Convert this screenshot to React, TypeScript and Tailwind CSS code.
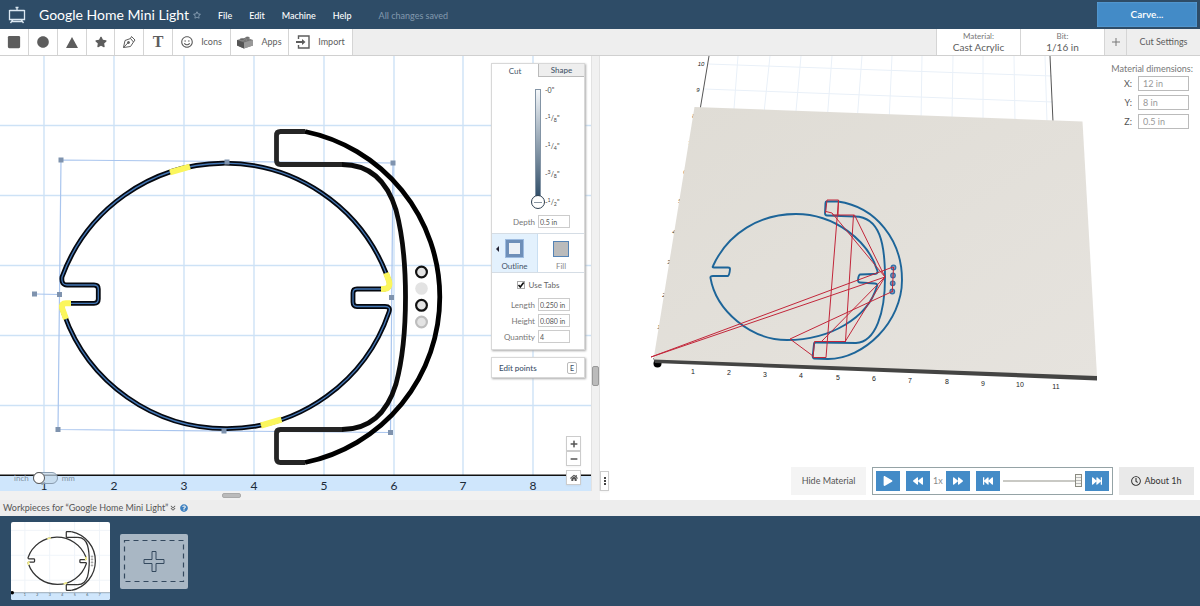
import type { ReactNode } from "react";
import clsx from "clsx";
import {
  FaBackward,
  FaCircle,
  FaFastBackward,
  FaFastForward,
  FaForward,
  FaHome,
  FaMinus,
  FaPlay,
  FaPlus,
  FaQuestionCircle,
  FaRegClock,
  FaRegSmile,
  FaRegStar,
  FaSquare,
  FaStar,
} from "react-icons/fa";
import { FaAnglesDown } from "react-icons/fa6";

const TOP_ARC = "M62 277A173.3 173.3 0 0 1 386 273";
const RING =
  TOP_ARC +
  "L389 281Q391 289 383 289H357Q353 289 353 293V302Q353 306.5 357 306.5H385Q391 306.5 389 312A172 172 0 0 1 64 314L62 308Q61 303.3 66 303.3H94Q98.3 303.3 98.3 299V289Q98.3 285 94 285H67Q61 285 62 277Z";
const BRACKET_OUTER = "M305 131.5A169 169 0 0 1 305 462.5";
const BRACKET_INNER =
  "M342 429.5C372 429.5 388 410 396 384C403 358 405.5 329 405.5 297C405.5 265 403 236 396 210C388 184 372 164.5 342 164.5";
const BRACKET_ENDS = [
  "M342 164.5H280.5Q276.5 164.5 276.5 160.5V135.5Q276.5 131.5 280.5 131.5H305",
  "M305 462.5H280.5Q276.5 462.5 276.5 458.5V433.5Q276.5 429.5 280.5 429.5H342",
];
const TABS = [
  "M170 172.3L190 166.7",
  "M386 273L389 281Q391 289 383 289H381",
  "M71 303.3H66Q61 303.3 62 308L66 319",
  "M261 425.5L281.5 419.5",
];
const HANDLES = [
  [61, 160],
  [227, 162],
  [393, 163],
  [391.5, 297.5],
  [390.5, 432.5],
  [224, 431],
  [58, 429.5],
  [59.5, 294.5],
  [34.5, 294],
];
const GRID_X = [44, 114, 184, 254, 324, 394, 463, 533];
const GRID_Y = [125, 195, 265, 335, 405];

function CanvasDrawing() {
  return (
    <svg
      viewBox="0 56 591 435"
      preserveAspectRatio="xMinYMax slice"
      className="absolute inset-0 size-full"
      fill="none"
      aria-hidden="true"
    >
      <rect y="475" width="591" height="16" fill="#cfe6fc" />
      <g stroke="#cde2f6" strokeWidth="1.4">
        {GRID_X.map((x) => (
          <path key={x} d={`M${x} 56V475`} />
        ))}
        {GRID_Y.map((y) => (
          <path key={y} d={`M0 ${y}.5H591`} />
        ))}
      </g>
      <path d="M0 475.3H591" stroke="#111" strokeWidth="1.4" />
      <g
        fill="#1b2a38"
        fontFamily="Lato, sans-serif"
        fontSize="12"
        textAnchor="middle"
      >
        {GRID_X.map((x, i) => (
          <text key={x} x={x} y="490">
            {i + 1}
          </text>
        ))}
      </g>
      <path
        d="M61 160L393 163L390.500 432.500L58 429.500ZM34.500 294L59.500 294.500"
        stroke="#a9c5ee"
        strokeWidth="1.2"
      />
      <path d={RING} stroke="#05080f" strokeWidth="4.8" />
      <path d={RING} stroke="#4477b5" strokeWidth="1.3" />
      {TABS.map((d) => (
        <path key={d} d={d} stroke="#fbf65c" strokeWidth="6" />
      ))}
      <path d={BRACKET_OUTER} stroke="#000" strokeWidth="4.800" />
      <path d={BRACKET_INNER} stroke="#0b0b0b" strokeWidth="4.800" />
      {BRACKET_ENDS.map((d) => (
        <path key={d} d={d} stroke="#252525" strokeWidth="4.800" />
      ))}
      <g fill="#e3e3e3" strokeWidth="2.200">
        <circle cx="421.500" cy="272" r="5.400" stroke="#111" />
        <circle cx="421.500" cy="288.500" r="6.300" />
        <circle cx="421.500" cy="305.300" r="5.400" stroke="#111" />
        <circle cx="421.500" cy="322" r="5.400" stroke="#bdbdbd" />
      </g>
      {HANDLES.map(([x, y]) => (
        <rect
          key={`${x}-${y}`}
          x={x - 2.5}
          y={y - 2.5}
          width="5"
          height="5"
          fill="#7f93ae"
        />
      ))}
    </svg>
  );
}

function WorkpieceThumb() {
  return (
    <svg viewBox="-34 78 556 438" className="h-[78px] w-full" fill="none" aria-hidden="true">
      <path
        d="M44 78V475M183 78V475M323 78V475M463 78V475M-34 125H522M-34 265H522M-34 405H522"
        stroke="#eef3f8"
        strokeWidth="5"
      />
      <rect x="-34" y="475" width="556" height="41" fill="#cfe6fc" />
      <path d="M-34 475H522" stroke="#7b8d9c" strokeWidth="4" />
      <circle cx="-27" cy="475" r="10" fill="#000" />
      <g fill="#456" fontFamily="Lato, sans-serif" fontSize="20" textAnchor="middle">
        {GRID_X.slice(0, 7).map((x, i) => (
          <text key={x} x={x} y="494">
            {i + 1}
          </text>
        ))}
      </g>
      <g stroke="#333" strokeWidth="7">
        <path d={RING} />
        <path d={BRACKET_OUTER} />
        <path d={BRACKET_INNER} />
        {BRACKET_ENDS.map((d) => (
          <path key={d} d={d} />
        ))}
      </g>
      {TABS.map((d) => (
        <path key={d} d={d} stroke="#f6f08a" strokeWidth="9" />
      ))}
      <g stroke="#777" strokeWidth="4">
        <circle cx="421" cy="272" r="4" />
        <circle cx="421" cy="288" r="4" />
        <circle cx="421" cy="305" r="4" />
        <circle cx="421" cy="322" r="4" />
      </g>
    </svg>
  );
}

const BED_VERTICALS = [
  [738, 733],
  [770, 763],
  [801, 795],
  [832, 827],
  [862, 857],
  [892, 889],
  [922, 921],
  [953, 952],
  [983, 983],
  [1014, 1015],
  [1045, 1047],
];
const X_LABELS = [
  [693, 374],
  [729, 375],
  [765, 377],
  [801, 378],
  [838, 380],
  [874, 381],
  [910, 383],
  [947, 384],
  [983, 386],
  [1020, 387],
  [1056, 389],
];
const Y_LABELS = [
  [659, 329],
  [664, 297],
  [669, 264],
  [674, 234],
  [680, 203],
  [685, 174],
  [690, 145],
  [694, 118],
  [698, 92],
  [701, 66],
];

function PreviewDrawing() {
  return (
    <svg
      viewBox="600 56 600 444"
      preserveAspectRatio="xMinYMin slice"
      className="absolute inset-0 size-full"
      fill="none"
      aria-hidden="true"
    >
      <defs>
        <linearGradient id="board" x1="0" y1="0" x2="1" y2="1">
          <stop offset="0" stopColor="#dfdcd5" />
          <stop offset="1" stopColor="#e6e3de" />
        </linearGradient>
      </defs>
      <g stroke="#e9f0f8">
        {BED_VERTICALS.map(([top, bottom]) => (
          <path key={top} d={`M${top} 56L${bottom} 122`} />
        ))}
        <path d="M708 64L1052 76M704 89L1053 102" />
      </g>
      <path d="M709 56L700 110M1050 56L1053 122" stroke="#555" />
      <g
        fill="#222"
        fontFamily="'Liberation Sans', sans-serif"
        fontSize="7"
        textAnchor="middle"
      >
        {X_LABELS.map(([x, y], i) => (
          <text key={x} x={x} y={y}>
            {i + 1}
          </text>
        ))}
        {Y_LABELS.map(([x, y], i) => (
          <text key={x} x={x} y={y} fontSize="6" fontStyle="italic">
            {i + 1}
          </text>
        ))}
      </g>
      <circle cx="657.500" cy="363.500" r="4" fill="#000" />
      <path d="M653 358L1097 375V380.500L655 363Z" fill="#444443" />
      <path d="M694.500 107L1082.500 121.500L1097 376L653.500 359.500Z" fill="url(#board)" />
      <g stroke="#1d6599" strokeWidth="1.900" strokeLinejoin="round">
        <path d="M713 266C728 233 760 214 796 214C834 214 868 240 877.500 271Q878 274 874 274L860 274.500Q858.500 275 858 280Q858 282.500 860 282.500L875 283.500Q878 284 877 286C868 318 830 340 787 340C750 340 716 310 710.500 278Q710 276 713 276H728Q729.500 275 730 269Q730 267.500 728 267.500H714Q712 267.500 713 266Z" />
        <path d="M827 201.500H838C876 207 902 240 902 280C902 322 864 359 828 359L814 358.500Q812.500 358 812.700 356L814 344Q814 342.500 816 342.500L856 343C876 342 885 312 885 278C885 244 880 217 855 216.500L827 215.500Q825 215.500 825 213L825.500 203Q825.500 201.500 827 201.500Z" />
      </g>
      <g stroke="#2f70a8" strokeWidth="1.200" fill="#7f93b5">
        <circle cx="893.500" cy="267.500" r="2.300" />
        <circle cx="893" cy="275.500" r="2.300" />
        <circle cx="892.700" cy="283.300" r="2.300" />
        <circle cx="892.300" cy="291.500" r="2.300" />
      </g>
      <g stroke="#c2263a" strokeWidth="1" strokeLinejoin="round">
        <path d="M893 267L651 357L885 277L854.500 215H832M853.500 215L845.500 341L885 277L832 213L826 211.500" />
        <path d="M838.500 200L826 357.500H813L814.500 341.500H846" />
        <path d="M825.500 213L827 200H838.500L838 215" />
        <path d="M885 277L821.500 341.500" />
        <path d="M892.300 291.500L790 339L813 356M893.500 267L892.300 292" />
      </g>
    </svg>
  );
}

function ToolButton({
  label,
  className = "w-[29px]",
  showLabel,
  children,
}: {
  label: string;
  className?: string;
  showLabel?: boolean;
  children: ReactNode;
}) {
  return (
    <button
      type="button"
      aria-label={label}
      className={clsx(
        "flex items-center justify-center gap-2 border-r border-[#d5d5d5] bg-white text-[#5d5d5d]",
        className
      )}
    >
      {children}
      {showLabel ? <span>{label}</span> : null}
    </button>
  );
}

function Header() {
  return (
    <header className="flex h-[29px] items-center bg-[#2e4c67] pr-[3px] text-white">
      <svg viewBox="0 0 18 18" className="ml-2 size-[18px]" fill="none" stroke="#dce8f2" aria-hidden="true">
        <path d="M1.500 4.500H16.500M1.500 4V13.500H16.500V4M9 1V4.500M5 13.500L2.500 17M13 13.500L15.500 17M4 15.500H14" strokeWidth="1.300" />
        <path d="M7.500 1.500H10.500" strokeWidth="1.500" />
      </svg>
      <h1 className="ml-[13px] text-[14px] leading-5">Google Home Mini Light</h1>
      <FaRegStar className="ml-1 size-2 text-[#93a9bd]" />
      <nav className="ml-[17px] flex items-center gap-[17px] pt-[2px] text-[9px] font-medium">
        <a href="#file">File</a>
        <a href="#edit">Edit</a>
        <a href="#machine">Machine</a>
        <a href="#help">Help</a>
      </nav>
      <span className="ml-[27px] pt-[3px] text-[9px] text-[#8299ae]">All changes saved</span>
      <button
        type="button"
        className="ml-auto h-[25px] w-[100px] bg-[#438bc7] text-[10px] font-semibold shadow-[inset_0_0_2px_#77b1df]"
      >
        Carve...
      </button>
    </header>
  );
}

function Toolbar() {
  return (
    <div className="flex h-[27px] items-stretch border-b border-[#d0d0d0] bg-[#eee] text-[9px] text-[#5d5d5d]">
      <ToolButton label="Square">
        <FaSquare className="size-[14px]" />
      </ToolButton>
      <ToolButton label="Circle">
        <FaCircle className="size-3" />
      </ToolButton>
      <ToolButton label="Triangle">
        <svg viewBox="0 0 12 11" className="h-[11px] w-3" fill="currentColor">
          <path d="M6 0L12 11H0Z" />
        </svg>
      </ToolButton>
      <ToolButton label="Star" className="w-7">
        <FaStar className="size-3" />
      </ToolButton>
      <ToolButton label="Pen">
        <svg viewBox="0 0 14 14" className="size-[14px]" fill="none" stroke="currentColor">
          <path d="M1.500 12.500L3 5.500L8.500 3.500L11.500 7L8.500 11.500L1.500 12.500ZM8.500 3.500L9.500 1.500L13 5L11.500 7M1.500 12.500L6 7.800" />
          <circle cx="6.500" cy="7.500" r="1" fill="currentColor" />
        </svg>
      </ToolButton>
      <ToolButton label="Text">
        <span className="font-['Liberation_Serif',serif] text-[16px] leading-4 font-bold">T</span>
      </ToolButton>
      <ToolButton label="Icons" className="w-[58px]" showLabel>
        <FaRegSmile className="size-3" />
      </ToolButton>
      <ToolButton label="Apps" className="w-[58px]" showLabel>
        <svg viewBox="0 0 16 13" className="h-[13px] w-4" aria-hidden="true">
          <path d="M0 4L9 1.500L16 4V9.500L7 12.500L0 9.500Z" fill="#777" />
          <path d="M0 4L7 6.500V12.500L0 9.500Z" fill="#555" />
          <path d="M7 6.500L16 4V9.500L7 12.500Z" fill="#999" />
          <g fill="#666" stroke="#aaa" strokeWidth="0.400">
            <ellipse cx="5" cy="3.500" rx="2.200" ry="1.200" />
            <ellipse cx="10.500" cy="2" rx="2.200" ry="1.200" />
            <ellipse cx="11" cy="4" rx="2" ry="1" />
          </g>
        </svg>
      </ToolButton>
      <ToolButton label="Import" className="w-16" showLabel>
        <svg viewBox="0 0 14 14" className="size-[14px]" fill="none" stroke="currentColor" strokeWidth="1.400" aria-hidden="true">
          <path d="M2.500 4V1H13V13H2.500V10" />
          <path d="M0 7H7" strokeWidth="2" />
          <path d="M6 4L9.500 7L6 10Z" fill="currentColor" stroke="none" />
        </svg>
      </ToolButton>

      <button
        type="button"
        className="ml-auto flex w-[85px] flex-col items-center justify-center border-x border-[#d5d5d5] bg-white text-[10px]"
      >
        <span className="text-[8px] leading-[10px] text-[#777]">Material:</span>
        <span className="leading-3">Cast Acrylic</span>
      </button>
      <button
        type="button"
        className="flex w-[84px] flex-col items-center justify-center border-r border-[#d5d5d5] bg-white text-[10px]"
      >
        <span className="text-[8px] leading-[10px] text-[#777]">Bit:</span>
        <span className="leading-3">1/16 in</span>
      </button>
      <button
        type="button"
        aria-label="Add bit"
        className="flex w-[22px] items-center justify-center border-r border-[#d5d5d5] text-[#777]"
      >
        <svg viewBox="0 0 8 8" className="size-2" stroke="currentColor">
          <path d="M4 0V8M0 4H8" />
        </svg>
      </button>
      <button type="button" className="w-[73px]">
        Cut Settings
      </button>
    </div>
  );
}

const DEPTH_MARKS = [
  ["", "0"],
  ["1", "8"],
  ["1", "4"],
  ["3", "8"],
  ["1", "2"],
];

function Field({ id, label, value }: { id: string; label: string; value: string }) {
  return (
    <div className="flex items-center justify-end gap-[3px]">
      <label htmlFor={id} className="text-[#777]">
        {label}
      </label>
      <input
        id={id}
        defaultValue={value}
        className="h-[13px] w-8 border border-[#ccc] bg-white px-[1px] text-[7px] text-[#555]"
      />
    </div>
  );
}

function CutPanel() {
  return (
    <div className="border border-[#d8d8d8] bg-white text-[8px] leading-[10px] text-[#45566a] shadow-[1px_1px_2px_#aaa]">
      <div role="tablist" className="flex h-[13px] text-center">
        <button type="button" role="tab" aria-selected="true" className="w-1/2">
          Cut
        </button>
        <button
          type="button"
          role="tab"
          aria-selected="false"
          className="w-1/2 border-b border-l border-[#bbb] bg-[#eee] font-medium"
        >
          Shape
        </button>
      </div>

      <div className="flex justify-center pt-2 pl-5">
        <input
          type="range"
          aria-label="Cut depth"
          defaultValue="100"
          className="mt-1 h-[120px] w-[14px] appearance-none bg-transparent [writing-mode:vertical-lr] [&::-webkit-slider-runnable-track]:h-full [&::-webkit-slider-runnable-track]:w-[6px] [&::-webkit-slider-runnable-track]:bg-[linear-gradient(#f4f7fa,#2e4c67),linear-gradient(#8394a5,#8394a5)] [&::-webkit-slider-runnable-track]:bg-[length:4px_108px,6px_110px] [&::-webkit-slider-runnable-track]:bg-[position:1px_1px,0_0] [&::-webkit-slider-runnable-track]:bg-no-repeat [&::-webkit-slider-thumb]:-ml-1 [&::-webkit-slider-thumb]:size-[14px] [&::-webkit-slider-thumb]:appearance-none [&::-webkit-slider-thumb]:rounded-full [&::-webkit-slider-thumb]:border [&::-webkit-slider-thumb]:border-[#2c3e50] [&::-webkit-slider-thumb]:bg-white [&::-webkit-slider-thumb]:bg-[linear-gradient(#8a97a3,#8a97a3)] [&::-webkit-slider-thumb]:bg-[length:8px_1px] [&::-webkit-slider-thumb]:bg-center [&::-webkit-slider-thumb]:bg-no-repeat"
        />
        <div className="flex h-[122px] w-5 flex-col justify-between text-[7px] text-[#444]">
          {DEPTH_MARKS.map(([top, bottom]) => (
            <span key={top + bottom} className="whitespace-nowrap">
              {top ? (
                <>
                  -<sup>{top}</sup>/<sub>{bottom}</sub>"
                </>
              ) : (
                `-${bottom}"`
              )}
            </span>
          ))}
        </div>
      </div>

      <div className="pt-[6px] pr-[14px] pb-[5px]">
        <Field id="depth" label="Depth" value="0.5 in" />
      </div>

      <div className="flex h-10 border-y border-[#d5dde5]">
        <button
          type="button"
          aria-pressed="true"
          className="relative flex w-1/2 flex-col items-center justify-end gap-1 border-r border-[#c9dff2] bg-[#e3f1fd] pb-[1px]"
        >
          <span className="absolute top-3 left-1 border-y-[3px] border-r-[3px] border-y-transparent border-r-[#223]" />
          <span className="size-[17px] border-[3px] border-[#6f8fb8] bg-[#edf1f6] outline outline-[#9dbbe0]" />
          Outline
        </button>
        <button
          type="button"
          aria-pressed="false"
          className="flex w-1/2 flex-col items-center justify-end gap-1 pb-[1px] text-[#888]"
        >
          <span className="size-4 border border-[#5583b5] bg-[#bbb]" />
          Fill
        </button>
      </div>

      <label className="flex items-center justify-center gap-1 pt-[7px] text-[#666]">
        <span className="grid size-2 place-items-center">
          <input
            type="checkbox"
            defaultChecked
            className="peer col-start-1 row-start-1 size-2 appearance-none border border-[#aaa] bg-white"
          />
          <svg
            viewBox="0 0 8 8"
            className="pointer-events-none invisible col-start-1 row-start-1 size-2 peer-checked:visible"
            fill="none"
            stroke="#111"
            strokeWidth="1.600"
          >
            <path d="M1.500 4L3.300 6L6.700 1.500" />
          </svg>
        </span>
        Use Tabs
      </label>
      <div className="flex flex-col gap-[3px] pt-2 pr-[14px] pb-[6px]">
        <Field id="length" label="Length" value="0.250 in" />
        <Field id="height" label="Height" value="0.080 in" />
        <Field id="quantity" label="Quantity" value="4" />
      </div>
    </div>
  );
}

function ZoomButton({ label, children }: { label: string; children: ReactNode }) {
  return (
    <button
      type="button"
      aria-label={label}
      className="flex size-[15px] items-center justify-center border border-[#ccc] bg-white text-[#555] shadow-xs"
    >
      {children}
    </button>
  );
}

function DesignPane() {
  return (
    <section className="grid w-1/2 grid-cols-[1fr_9px] grid-rows-[1fr_9px]">
      <div className="relative overflow-hidden bg-white">
        <CanvasDrawing />
        <div className="absolute top-[7px] right-[6px] flex w-[94px] flex-col gap-[7px]">
          <CutPanel />
          <button
            type="button"
            className="flex h-[21px] items-center justify-between border border-[#d8d8d8] bg-white px-[7px] text-[8px] font-medium text-[#3b4f68] shadow-[1px_1px_2px_#aaa]"
          >
            Edit points
            <kbd className="rounded-xs border border-[#bbb] px-[2px] font-[Lato,sans-serif] text-[7px] leading-[10px]">
              E
            </kbd>
          </button>
        </div>
        <div className="absolute right-[10px] bottom-[6px] flex flex-col">
          <ZoomButton label="Zoom in">
            <FaPlus className="size-2" />
          </ZoomButton>
          <ZoomButton label="Zoom out">
            <FaMinus className="size-2" />
          </ZoomButton>
          <div className="mt-1">
            <ZoomButton label="Reset view">
              <FaHome className="size-2" />
            </ZoomButton>
          </div>
        </div>
        <div className="absolute bottom-[7px] left-[14px] flex items-center gap-1 text-[8px] leading-3 text-[#8090a0]">
          inch
          <button
            type="button"
            role="switch"
            aria-checked="false"
            aria-label="Use millimetres"
            className="h-3 w-[25px] rounded-full border border-[#8a9db0] bg-[#c5d8ea]/70"
          >
            <span className="-mt-[1px] -ml-[1px] block size-3 rounded-full border border-[#555] bg-white" />
          </button>
          mm
        </div>
      </div>
      <div className="border-x border-[#e2e2e2] bg-[#f1f1f1]">
        <div className="mt-[310px] h-5 rounded-xs border border-[#999] bg-[#bbb]" />
      </div>
      <div className="bg-[#f1f1f1] py-[2px]">
        <div className="ml-[222px] h-[5px] w-[19px] rounded-xs border border-[#aaa] bg-[#bbb]" />
      </div>
      <div className="bg-[#f1f1f1]" />
    </section>
  );
}

const DIMENSIONS = [
  ["X", "12 in"],
  ["Y", "8 in"],
  ["Z", "0.5 in"],
];

function PlayerButton({ label, children }: { label: string; children: ReactNode }) {
  return (
    <button
      type="button"
      aria-label={label}
      className="flex h-5 w-6 items-center justify-center bg-[#438bc7] text-[10px] text-white"
    >
      {children}
    </button>
  );
}

function PreviewPane() {
  return (
    <section className="relative w-1/2 overflow-hidden bg-white text-[#555]">
      <PreviewDrawing />
      <div className="absolute top-[7px] right-[7px] flex flex-col items-end gap-1 text-[9px]">
        <p className="-mb-[3px] leading-3 text-[#777]">Material dimensions:</p>
        {DIMENSIONS.map(([axis, value]) => (
          <label key={axis} className="flex h-[15px] items-center gap-[6px] pr-1">
            {axis}:
            <input
              defaultValue={value}
              className="h-[15px] w-[51px] border border-[#bbb] px-1 text-[#999]"
            />
          </label>
        ))}
      </div>

      <button
        type="button"
        aria-label="Resize panes"
        className="absolute bottom-[9px] left-0 flex h-5 w-[9px] flex-col items-center justify-center gap-[1px] border border-[#ccc] bg-white shadow-xs"
      >
        <span className="size-[2px] bg-[#444]" />
        <span className="size-[2px] bg-[#444]" />
        <span className="size-[2px] bg-[#444]" />
      </button>

      <div className="absolute right-[6px] bottom-[5px] flex items-center gap-[6px] text-[9px]">
        <button type="button" className="h-7 w-[75px] bg-[#f4f4f4]">
          Hide Material
        </button>
        <div className="flex h-7 w-[241px] items-center gap-[3px] border border-[#95a3a6] bg-white px-[3px]">
          <PlayerButton label="Play">
            <FaPlay />
          </PlayerButton>
          <div className="mx-[3px] flex items-center gap-[3px]">
            <PlayerButton label="Slower">
              <FaBackward />
            </PlayerButton>
            <span className="text-[#888]">1x</span>
            <PlayerButton label="Faster">
              <FaForward />
            </PlayerButton>
          </div>
          <PlayerButton label="Skip to start">
            <FaFastBackward />
          </PlayerButton>
          <input
            type="range"
            aria-label="Playback position"
            defaultValue="100"
            className="h-[13px] min-w-0 flex-1 appearance-none bg-transparent [&::-webkit-slider-runnable-track]:h-[2px] [&::-webkit-slider-runnable-track]:bg-[#c9c9c4] [&::-webkit-slider-thumb]:-mt-[6px] [&::-webkit-slider-thumb]:h-[13px] [&::-webkit-slider-thumb]:w-[7px] [&::-webkit-slider-thumb]:appearance-none [&::-webkit-slider-thumb]:border [&::-webkit-slider-thumb]:border-[#8a8a80] [&::-webkit-slider-thumb]:bg-[repeating-linear-gradient(#f5f5f0_0_2px,#bbb_2px_3px)]"
          />
          <PlayerButton label="Skip to end">
            <FaFastForward />
          </PlayerButton>
        </div>
        <button
          type="button"
          className="flex h-7 w-[75px] items-center justify-center gap-[3px] bg-[#e9e9e9] text-[#333]"
        >
          <FaRegClock className="size-[10px]" />
          About 1h
        </button>
      </div>
    </section>
  );
}

export default function App() {
  return (
    <div className="flex min-h-screen flex-col bg-[#2e4c67] font-[Lato,sans-serif]">
      <Header />
      <Toolbar />
      <main className="flex min-h-96 flex-1">
        <DesignPane />
        <PreviewPane />
      </main>
      <footer>
        <div className="flex h-4 items-center gap-[2px] bg-[#ededed] px-[3px] text-[9px] text-[#555]">
          <h2>Workpieces for “Google Home Mini Light”</h2>
          <FaAnglesDown className="size-[6px]" />
          <FaQuestionCircle className="ml-[2px] size-2 text-[#3d80c0]" />
        </div>
        <div className="flex h-[90px] items-center gap-[10px] px-[11px]">
          <button
            type="button"
            aria-label="Workpiece 1"
            className="h-[78px] w-[99px] overflow-hidden rounded-xs bg-white"
          >
            <WorkpieceThumb />
          </button>
          <button
            type="button"
            aria-label="Add workpiece"
            className="h-[55px] w-[68px] rounded-xs bg-[#a9b7c4]"
          >
            <svg viewBox="0 0 68 55" className="size-full" fill="none" stroke="#34495e" aria-hidden="true">
              <path d="M4.500 6.500H63.500V47.500H4.500Z" strokeDasharray="5 4" strokeWidth="1.200" />
              <path d="M32 17.500H36V25.500H44V29.500H36V37.500H32V29.500H24V25.500H32Z" />
            </svg>
          </button>
        </div>
      </footer>
    </div>
  );
}
